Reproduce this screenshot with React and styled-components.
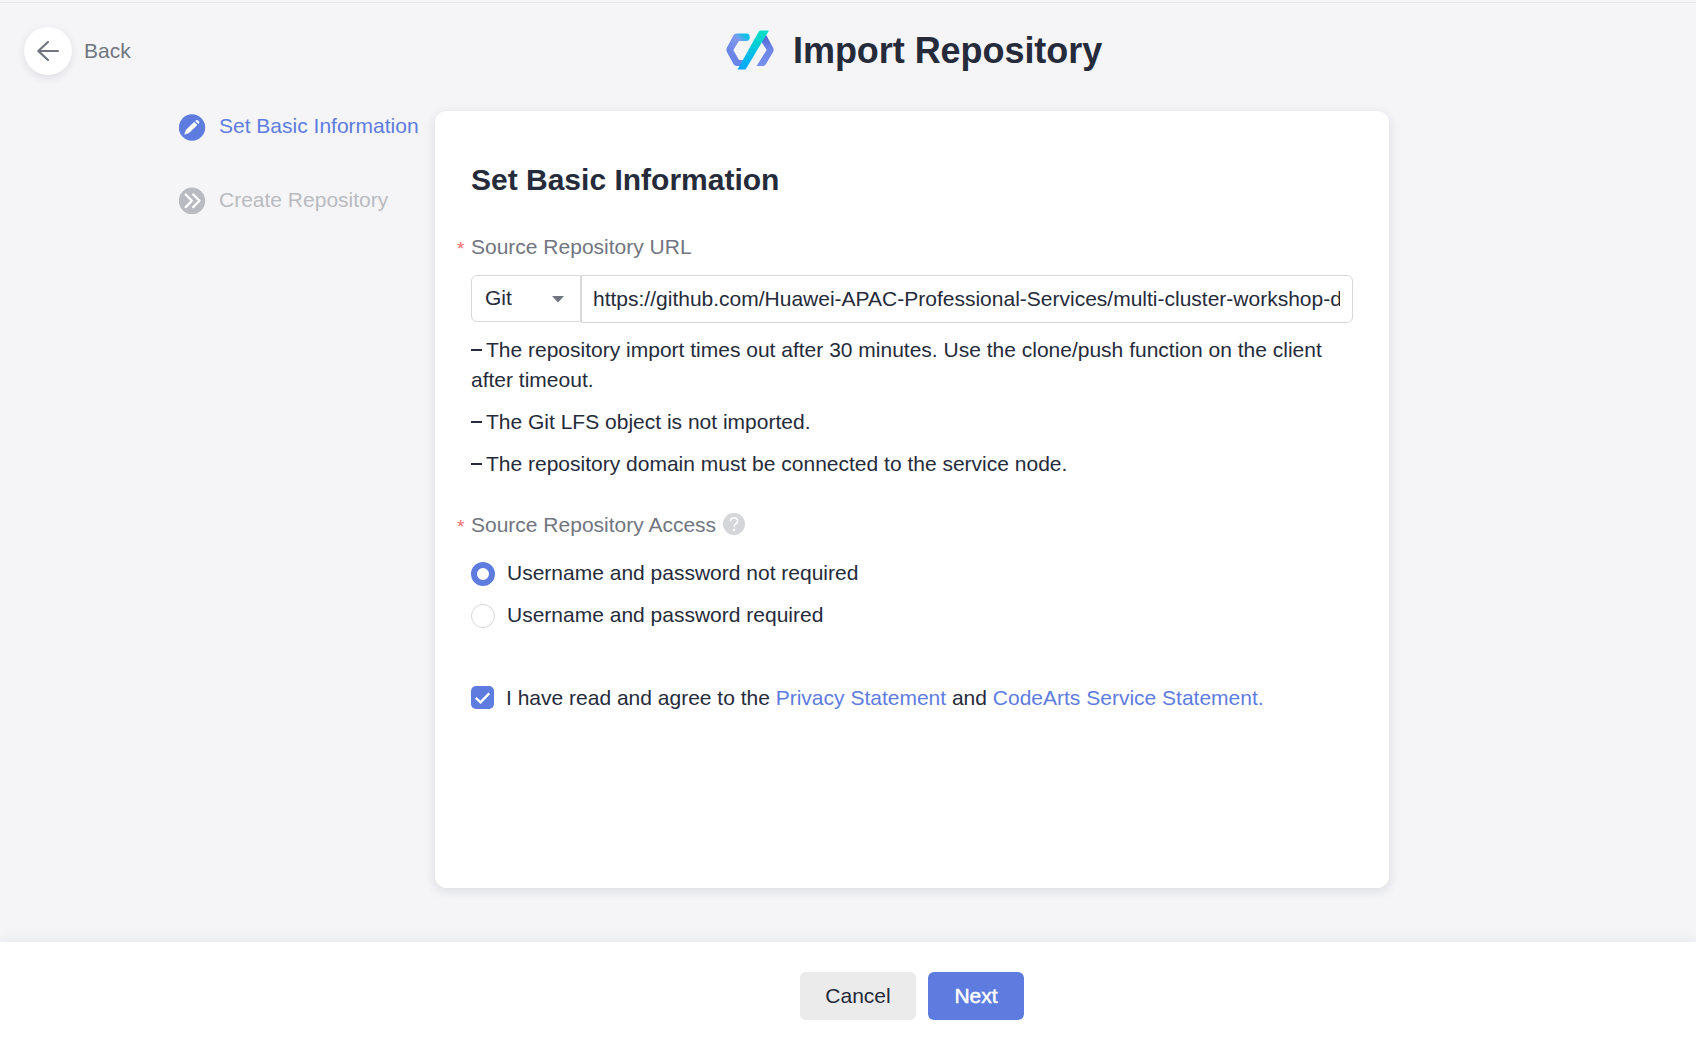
import React, { useState } from 'react';
import styled, { createGlobalStyle } from 'styled-components';

const color = {
  page: '#f5f5f8',
  text: '#252b3a',
  label: '#71757f',
  disabled: '#babbc0',
  brand: '#5e7ce0',
  line: '#d7d8da',
  danger: '#f66f6a',
};

const GlobalStyle = createGlobalStyle`
  * { box-sizing: border-box; }
  body {
    margin: 0;
    background: ${color.page};
    color: ${color.text};
    font-family: "Liberation Sans", Arial, sans-serif;
    font-size: 21px;
    line-height: 30px;
  }
`;

const Page = styled.div`
  display: flex;
  flex-direction: column;
  height: 1042px;
  overflow: hidden;
`;

const TopBar = styled.div`
  flex: none;
  height: 3px;
  border-bottom: 1px solid #e8e8ea;
`;

const Header = styled.header`
  flex: none;
  display: grid;
  grid-template-columns: 702px auto 1fr;
  align-items: center;
  height: 96px;
  padding-left: 24px;
`;

const BackLink = styled.a`
  display: flex;
  align-items: center;
  gap: 12px;
  color: ${color.label};
`;

const BackCircle = styled.span`
  display: flex;
  align-items: center;
  justify-content: center;
  width: 48px;
  height: 48px;
  border-radius: 50%;
  background: #fff;
  box-shadow: 0 3px 9px rgba(37, 43, 58, 0.1);
`;

const Brand = styled.div`
  display: flex;
  align-items: center;
  gap: 19px;

  svg { margin-bottom: 2px; }
`;

const Title = styled.h1`
  margin: 0;
  font-size: 36px;
  line-height: 48px;
  font-weight: 700;
  letter-spacing: -0.05px;
`;

const Body = styled.main`
  flex: none;
  display: flex;
  height: 843px;
  padding: 12px 307px 54px 179px;
`;

const Steps = styled.nav`
  display: flex;
  flex-direction: column;
  gap: 44px;
  width: 256px;
`;

const Step = styled.div`
  display: flex;
  align-items: center;
  gap: 13px;
  color: ${(p) => (p.$active ? color.brand : color.disabled)};
  white-space: nowrap;

  svg { margin-top: ${(p) => (p.$active ? 3 : 1)}px; }
`;

const Card = styled.section`
  flex: 1;
  display: flex;
  flex-direction: column;
  padding: 48px 36px;
  border-radius: 12px;
  background: #fff;
  box-shadow: 0 3px 12px rgba(37, 43, 58, 0.12);
`;

const CardTitle = styled.h2`
  margin: 0 0 31px;
  font-size: 30px;
  line-height: 42px;
`;

const Label = styled.div`
  display: flex;
  align-items: center;
  height: 30px;
  margin-left: -14px;
  color: ${color.label};
`;

const Required = styled.span`
  width: 14px;
  padding-top: 4px;
  color: ${color.danger};
  font-size: 19px;
`;

const HelpIcon = styled.svg`
  margin: -2px 0 0 7px;
`;

const UrlRow = styled.div`
  display: flex;
  align-items: flex-start;
  margin-top: 13px;
`;

const TypeSelect = styled.div`
  display: flex;
  align-items: center;
  justify-content: space-between;
  width: 110px;
  height: 47px;
  padding: 0 16px 2px 13px;
  border: 1px solid ${color.line};
  border-radius: 6px 0 0 6px;

  svg { margin-top: 3px; }
`;

const UrlInput = styled.input`
  width: 772px;
  height: 48px;
  padding: 0 12px 0 11px;
  border: 1px solid ${color.line};
  border-radius: 0 6px 6px 0;
  outline: none;
  background: #fff;
  color: ${color.text};
  font: inherit;
`;

const Notes = styled.ul`
  display: flex;
  flex-direction: column;
  gap: 12px;
  margin: 12px 0 31px;
  padding: 0;
  list-style: none;
`;

const Note = styled.li`
  &::before {
    content: '';
    display: inline-block;
    width: 11px;
    height: 2px;
    margin-right: 4px;
    background: ${color.text};
    vertical-align: 6px;
  }
`;

const Options = styled.div`
  display: flex;
  flex-direction: column;
  gap: 12px;
  margin-top: 18px;
`;

const Option = styled.div`
  display: flex;
  align-items: center;
  gap: 12px;
  height: 30px;
`;

const RadioMark = styled.span`
  width: 24px;
  height: 24px;
  margin-top: 1px;
  border: ${(p) => (p.$checked ? `6px solid ${color.brand}` : `1px solid ${color.line}`)};
  border-radius: 50%;
  background: #fff;
`;

const Agreement = styled.div`
  display: flex;
  align-items: center;
  gap: 12px;
  margin-top: 53px;
`;

const CheckMark = styled.span`
  display: flex;
  align-items: center;
  justify-content: center;
  width: 23px;
  height: 23px;
  margin-bottom: 1px;
  border-radius: 5px;
  background: ${color.brand};
`;

const Link = styled.a`
  color: ${color.brand};
`;

const Footer = styled.footer`
  flex: 1;
  display: flex;
  justify-content: center;
  gap: 12px;
  padding: 30px 0 0 128px;
  background: #fff;
  box-shadow: 0 -3px 15px rgba(37, 43, 58, 0.06);
`;

const Button = styled.button`
  width: ${(p) => (p.$primary ? 96 : 116)}px;
  height: 48px;
  padding: 0;
  border: 0;
  border-radius: 6px;
  background: ${(p) => (p.$primary ? color.brand : '#ebebeb')};
  color: ${(p) => (p.$primary ? '#fff' : color.text)};
  -webkit-text-stroke: ${(p) => (p.$primary ? '0.5px #fff' : '0')};
  font: inherit;
`;

function Logo() {
  return (
    <svg width="48" height="40" viewBox="0 0 48 40">
      <defs>
        <linearGradient id="hexLeft" gradientUnits="userSpaceOnUse" x1="4" y1="24" x2="22" y2="4">
          <stop offset="0" stopColor="#6a83e8" />
          <stop offset="0.62" stopColor="#8099ee" />
          <stop offset="0.88" stopColor="#10bfe6" />
        </linearGradient>
        <linearGradient id="hexRight" x1="0" y1="0" x2="0" y2="1">
          <stop offset="0" stopColor="#4d62cf" />
          <stop offset="0.4" stopColor="#6a83e8" />
          <stop offset="1" stopColor="#7890ee" />
        </linearGradient>
        <linearGradient id="slash" x1="0" y1="0" x2="0" y2="1">
          <stop offset="0" stopColor="#06e2c1" />
          <stop offset="1" stopColor="#02a6ff" />
        </linearGradient>
      </defs>
      <path d="M20.5 3.5H10.5Q8.5 3.5 7.500 5.200L.8 17.8Q0 20 .8 21.8L7.500 34Q8.500 36 10.500 36H16L18 30H13L7.300 20L13 11H20.500Q23.800 10.500 23.800 7.200Q23.800 3.800 20.500 3.500Z" fill="url(#hexLeft)" />
      <path d="M38 5.500L40.500 5.500L47.200 18Q48 20 47.200 21.800L40 34Q39 36 37 36H30.500L40.700 20L35.500 12Z" fill="url(#hexRight)" />
      <path d="M34.500 .5H43L20.500 38Q19.800 39.500 18 39.500H11.500L32.500 2Q33.200 .5 34.500 .5Z" fill="url(#slash)" />
    </svg>
  );
}

function ArrowLeft() {
  return (
    <svg width="24" height="24" viewBox="0 0 24 24" fill="none" stroke={color.label} strokeWidth="2.200" strokeLinecap="round" strokeLinejoin="round">
      <path d="M22 12H2.500M12 3L2.300 12L12 21" />
    </svg>
  );
}

function PencilBadge() {
  return (
    <svg width="27" height="27" viewBox="0.500 0 27 27">
      <circle cx="13.500" cy="13.500" r="13.200" fill={color.brand} />
      <path d="M6.200 20.300L7.700 15.900L15.700 8.200L18.500 10.900L10.700 18.600Z" fill="#fff" stroke="#fff" strokeWidth="0.600" strokeLinejoin="round" />
      <path d="M16.700 7L17.700 6.200Q18.600 5.600 19.500 6.400L20.500 7.400Q21.200 8.300 20.500 9.200L19.700 10Z" fill="#fff" />
    </svg>
  );
}

function ChevronsBadge() {
  return (
    <svg width="27" height="27" viewBox="0.500 -0.500 27 27">
      <circle cx="13.500" cy="13.300" r="13.200" fill={color.disabled} />
      <path d="M7.200 7L13.400 13.300L7.200 19.600M14.700 7L21 13.300L14.700 19.600" fill="none" stroke="#fff" strokeWidth="2.300" strokeLinecap="round" strokeLinejoin="round" />
    </svg>
  );
}

function Help() {
  return (
    <HelpIcon width="22" height="22" viewBox="0 0 22 22">
      <circle cx="11" cy="11" r="11" fill="#d5d6d9" />
      <path d="M7.400 8.300C7.400 6 9 4.700 11 4.700S14.700 6 14.700 8C14.700 10.500 11 10.700 11 13.800" fill="none" stroke="#fff" strokeWidth="1.600" />
      <circle cx="11" cy="17" r="1.250" fill="#fff" />
    </HelpIcon>
  );
}

const notes = [
  'The repository import times out after 30 minutes. Use the clone/push function on the client after timeout.',
  'The Git LFS object is not imported.',
  'The repository domain must be connected to the service node.',
];

const accessOptions = ['Username and password not required', 'Username and password required'];

export default function App() {
  const [access, setAccess] = useState(0);
  const [url, setUrl] = useState(
    'https://github.com/Huawei-APAC-Professional-Services/multi-cluster-workshop-d'
  );

  return (
    <Page>
      <GlobalStyle />
      <TopBar />
      <Header>
        <BackLink>
          <BackCircle><ArrowLeft /></BackCircle>
          Back
        </BackLink>
        <Brand>
          <Logo />
          <Title>Import Repository</Title>
        </Brand>
      </Header>
      <Body>
        <Steps>
          <Step $active><PencilBadge />Set Basic Information</Step>
          <Step><ChevronsBadge />Create Repository</Step>
        </Steps>
        <Card>
          <CardTitle>Set Basic Information</CardTitle>
          <Label><Required>*</Required>Source Repository URL</Label>
          <UrlRow>
            <TypeSelect>
              Git
              <svg width="12" height="7" viewBox="0 0 12 7"><path d="M0 0H12L6 6.500Z" fill={color.label} /></svg>
            </TypeSelect>
            <UrlInput value={url} onChange={(e) => setUrl(e.target.value)} />
          </UrlRow>
          <Notes>
            {notes.map((n) => <Note key={n}>{n}</Note>)}
          </Notes>
          <Label><Required>*</Required>Source Repository Access<Help /></Label>
          <Options>
            {accessOptions.map((o, i) => (
              <Option key={o} onClick={() => setAccess(i)}>
                <RadioMark $checked={access === i} />
                {o}
              </Option>
            ))}
          </Options>
          <Agreement>
            <CheckMark>
              <svg width="15" height="12" viewBox="0 0 15 12" fill="none" stroke="#fff" strokeWidth="2.400"><path d="M.8 5.800L5.500 10.300L14.200 1.300" /></svg>
            </CheckMark>
            <span>
              I have read and agree to the <Link>Privacy Statement</Link> and <Link>CodeArts Service Statement.</Link>
            </span>
          </Agreement>
        </Card>
      </Body>
      <Footer>
        <Button>Cancel</Button>
        <Button $primary>Next</Button>
      </Footer>
    </Page>
  );
}
